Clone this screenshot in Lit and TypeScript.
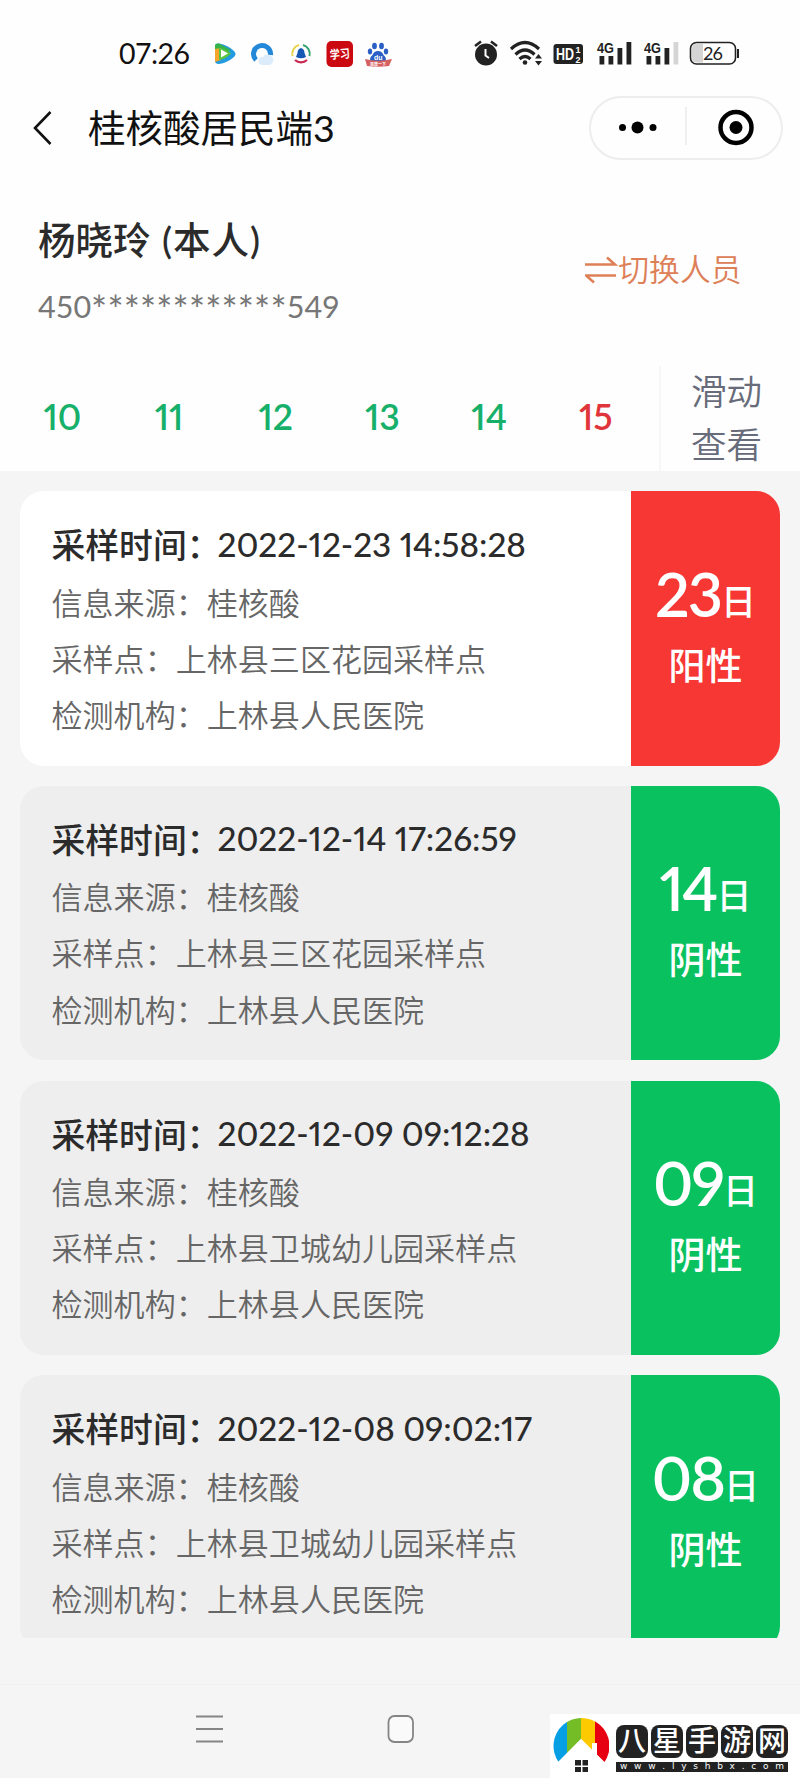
import { LitElement, html, css, svg } from "lit";
import { customElement, property } from "lit/decorators.js";
import { classMap } from "lit/directives/class-map.js";

interface Sample {
  time: string;
  source: string;
  place: string;
  agency: string;
  day: string;
  positive: boolean;
}

const samples: Sample[] = [
  { time: "2022-12-23 14:58:28", source: "桂核酸", place: "上林县三区花园采样点", agency: "上林县人民医院", day: "23", positive: true },
  { time: "2022-12-14 17:26:59", source: "桂核酸", place: "上林县三区花园采样点", agency: "上林县人民医院", day: "14", positive: false },
  { time: "2022-12-09 09:12:28", source: "桂核酸", place: "上林县卫城幼儿园采样点", agency: "上林县人民医院", day: "09", positive: false },
  { time: "2022-12-08 09:02:17", source: "桂核酸", place: "上林县卫城幼儿园采样点", agency: "上林县人民医院", day: "08", positive: false },
];

@customElement("status-bar")
class StatusBar extends LitElement {
  static styles = css`
    :host { display: block; height: 80px; }
    svg { display: block; }
    .t { font-family: Lato, "Liberation Sans", sans-serif; }
    .hd { font-family: "Liberation Sans", sans-serif; font-weight: 700; }
    .zh { font-family: "Noto Sans CJK SC", sans-serif; font-weight: 700; }
  `;
  signal(x: number, last: string) {
    return svg`<g transform="translate(${x} 0)">
      <text class="hd" x="-3" y="53" font-size="15.500" textLength="17" lengthAdjust="spacingAndGlyphs" fill="#222">4G</text>
      <rect x="-0.500" y="56" width="4.800" height="8.500" fill="#222"/>
      <rect x="8.500" y="56" width="4.800" height="8.500" fill="#222"/>
      <rect x="17.500" y="48" width="4.800" height="16.500" fill="#222"/>
      <rect x="26.500" y="42" width="4.800" height="22.500" fill="${last}"/>
    </g>`;
  }
  render() {
    return html`<svg width="800" height="80" viewBox="0 0 800 80">
      <text class="t" x="119" y="64" font-size="28.500" textLength="71" fill="#111">07:26</text>
      <path d="M215 46Q215 43 219 43.500Q228 45 234 51Q237 54 234 57Q227 63 219 64Q215 64 215 61Z" fill="#239be0"/>
      <path d="M215 46Q215 43 219 43.500L231 50L222 54L215 50Z" fill="#36b44a"/>
      <path d="M215 49L221 48V60L215 62Z" fill="#f5a52a"/>
      <path d="M219 48Q227 49 231 53.500Q226 59 219 60Z" fill="#59c441"/>
      <path d="M221 49.500L228 53.500L221 57.500Z" fill="#fff"/>
      <path d="M256 60A8.500 8.500 0 1 1 270.500 55" fill="none" stroke="#2488d8" stroke-width="5"/>
      <path d="M262 65H270A5 5 0 0 0 271 56A5 5 0 0 0 263 57A4 4 0 0 0 262 65Z" fill="#dcecfa"/>
      <path d="M292.500 56A9 9 0 0 1 299 45" fill="none" stroke="#e6d34a" stroke-width="2"/>
      <path d="M303 45A9 9 0 0 1 309.500 56" fill="none" stroke="#35a06f" stroke-width="2"/>
      <path d="M295 60A9 9 0 0 0 307 60" fill="none" stroke="#c92950" stroke-width="2.300"/>
      <path d="M301 48Q304.500 49 304.500 53L306 57Q301 59.500 296 57L297.500 53Q297.500 49 301 48Z" fill="#1758b5"/>
      <rect x="326.500" y="41" width="26.500" height="26" rx="5" fill="#ca0910"/>
      <text class="zh" x="330" y="58.500" font-size="12" textLength="20" lengthAdjust="spacingAndGlyphs" fill="#fff" transform="rotate(-5 340 55)">学习</text>
      <g fill="#2b5fc5">
        <ellipse cx="374.500" cy="46" rx="2.400" ry="3.200"/><ellipse cx="381.500" cy="46" rx="2.400" ry="3.200"/>
        <ellipse cx="370" cy="51.500" rx="2.200" ry="3"/><ellipse cx="386" cy="51.500" rx="2.200" ry="3"/>
        <path d="M378 51Q382 51 383.500 55Q387 58 385.500 61Q383 63 378 62Q373 63 370.500 61Q369 58 372.500 55Q374 51 378 51Z"/>
      </g>
      <text class="hd" x="374" y="59.500" font-size="7" fill="#fff">du</text>
      <path d="M365 59Q378 62.500 392 59L389 66Q378 67.500 367 66Z" fill="#d56161"/>
      <text class="zh" x="370" y="65.500" font-size="4" fill="#fff">百度一下</text>

      <circle cx="486" cy="54.500" r="11" fill="#222"/>
      <path d="M485.500 49V55.500L489 58" fill="none" stroke="#fff" stroke-width="2"/>
      <path d="M475 46L481 41.500M491 41.500L497 46" stroke="#222" stroke-width="2.500"/>
      <g fill="none" stroke="#222" stroke-width="3.200">
        <path d="M511 49Q525 36 539 49"/><path d="M515.500 54.500Q525 45.500 534.500 54.500"/><path d="M519.500 59Q525 54 530.500 59"/>
      </g>
      <circle cx="525" cy="62.500" r="2.300" fill="#222"/>
      <path d="M535 58.500L538.500 54L542 58.500ZM535 61L538.500 65.500L542 61Z" fill="#222"/>
      <rect x="553.500" y="44" width="29.500" height="20" rx="3" fill="#222"/>
      <text class="hd" x="556" y="60" font-size="16.500" textLength="18" lengthAdjust="spacingAndGlyphs" fill="#fff">HD</text>
      <text class="hd" x="575.500" y="53.300" font-size="9" fill="#fff">1</text>
      <text class="hd" x="575.500" y="62.500" font-size="9" fill="#fff">2</text>
      ${this.signal(600, "#222")}
      ${this.signal(647, "#d5d5d5")}
      <rect x="690.500" y="42.500" width="45" height="21.500" rx="6" fill="#fff" stroke="#222" stroke-width="1.600"/>
      <path d="M703 44V62.500H696Q692 62.500 692 58V48.500Q692 44 696 44Z" fill="#d4d4d4"/>
      <rect x="737" y="49" width="2" height="9" fill="#222"/>
      <text class="t" x="703" y="60" font-size="18" textLength="20" fill="#222">26</text>
    </svg>`;
  }
}

@customElement("sample-card")
class SampleCard extends LitElement {
  @property({ attribute: false }) sample!: Sample;
  static styles = css`
    :host { display: block; flex: none; }
    .card {
      display: grid; grid-template-columns: 611px 149px; height: 274.500px;
      border-radius: 24px; overflow: hidden; background: #eee;
    }
    .positive { background: #fff; }
    .info { padding: 25px 0 0 31.500px; white-space: nowrap; }
    .head { display: flex; align-items: center; height: 55px; font-weight: 500; font-size: 33.800px; color: #2b2b2b; }
    .time {
      font-family: Lato, "Liberation Sans", sans-serif; font-size: 33.300px; font-weight: 500;
      font-feature-settings: "pnum"; margin-left: -3px;
    }
    .row { height: 56.200px; line-height: 56.200px; font-size: 31.050px; font-weight: 350; color: #666; }
    .first { padding-top: 3.500px; }
    .badge {
      background: #0ac160; color: #fff; font-weight: 500;
      display: flex; flex-direction: column; align-items: center; padding-top: 67.500px;
    }
    .positive .badge { background: #f63734; }
    .day { display: flex; align-items: baseline; height: 72px; line-height: 70px; font-size: 35px; }
    .num { font-family: Lato, "Liberation Sans", sans-serif; font-size: 61px; font-weight: 600; font-feature-settings: "pnum"; letter-spacing: -2px; }
    .unit { position: relative; top: -2px; }
    .result { height: 70px; line-height: 70px; font-size: 37px; }
  `;
  render() {
    const s = this.sample;
    return html`<div class=${classMap({ card: true, positive: s.positive })}>
      <div class="info">
        <div class="head"><span>采样时间：</span><span class="time">${s.time}</span></div>
        <div class="row first">信息来源：${s.source}</div>
        <div class="row">采样点：${s.place}</div>
        <div class="row">检测机构：${s.agency}</div>
      </div>
      <div class="badge">
        <div class="day"><span class="num">${s.day}</span><span class="unit">日</span></div>
        <div class="result">${s.positive ? "阳性" : "阴性"}</div>
      </div>
    </div>`;
  }
}

@customElement("site-mark")
class SiteMark extends LitElement {
  static styles = css`
    :host { display: flex; width: 250px; height: 64px; background: #fff; }
    .logo { width: 66px; height: 64px; flex: none; }
    .words { padding-top: 10.500px; }
    .tiles { display: flex; gap: 3px; margin-bottom: 4.500px; }
    .tile {
      width: 32px; height: 33px; line-height: 31px; border-radius: 8px; background: #222; color: #fff;
      text-align: center; font-size: 28px; font-weight: 500;
    }
    .url {
      display: flex; justify-content: space-between; width: 164px; padding: 0 4px; height: 10px; line-height: 8px;
      background: #222; color: #fff; font-family: "DejaVu Sans", sans-serif; font-size: 9px;
    }
  `;
  render() {
    return html`<svg class="logo" viewBox="0 0 66 64">
        <defs><clipPath id="dome"><path d="M8.500 48A28 28 0 1 1 54.500 48L31 25Z"/></clipPath></defs>
        <g clip-path="url(#dome)">
          <rect x="3" y="4" width="14" height="46" fill="#079fe4"/><rect x="17" y="4" width="14" height="46" fill="#75bd26"/>
          <rect x="31" y="4" width="14" height="46" fill="#fdca00"/><rect x="45" y="4" width="14" height="46" fill="#e70012"/>
        </g>
        <path d="M31 25L8 48H54L47 41V29H42V36Z" fill="#fff"/>
        <path d="M25 46H31V51.500H25ZM32.500 46H38V51.500H32.500ZM25 53H31V58H25ZM32.500 53H38V58H32.500Z" fill="#222"/>
      </svg>
      <div class="words">
        <div class="tiles">${[..."八星手游网"].map((c) => html`<span class="tile">${c}</span>`)}</div>
        <div class="url">${[..."www.lyshbx.com"].map((c) => html`<span>${c}</span>`)}</div>
      </div>`;
  }
}

@customElement("app-root")
class AppRoot extends LitElement {
  static styles = css`
    :host {
      display: flex; flex-direction: column; position: relative; width: 800px; height: 1778px; overflow: hidden;
      background: #f5f5f5; font-family: Lato, "Noto Sans CJK SC", sans-serif; color: #111;
    }
    .top { background: #fefefe; height: 471px; flex: none; }
    .bar { display: flex; align-items: center; height: 95px; padding: 0 17.500px 0 32px; }
    .back { width: 20px; height: 34px; margin-right: 36px; }
    .title { flex: 1; font-size: 37.500px; padding-bottom: 4px; }
    .capsule {
      display: flex; align-items: center; box-sizing: border-box; width: 194px; height: 64px;
      border: 2px solid #ededed; border-radius: 32px;
    }
    .person { display: flex; justify-content: space-between; height: 191px; padding: 0 58.500px 0 38px; }
    .name { padding-top: 35px; height: 60px; line-height: 60px; font-size: 37.500px; font-weight: 500; color: #2b2b2b; }
    .name .self { letter-spacing: 1px; margin-left: 2px; }
    .id { display: flex; height: 72px; line-height: 72px; font-size: 30.500px; color: #777; }
    .stars { font-size: 38px; letter-spacing: 0.150px; padding-top: 3px; }
    .switch { display: flex; align-items: center; height: 189px; font-size: 30.800px; font-weight: 350; color: #dd8058; }
    .switch span { padding-bottom: 4px; }
    .days { display: flex; height: 105px; }
    .strip { display: grid; grid-template-columns: repeat(6, 106.700px); padding-left: 9px; width: 650px; border-right: 2px solid #f7f7f7; }
    .date { line-height: 102px; text-align: center; font-size: 35.500px; font-weight: 600; color: #16b06a; font-feature-settings: "pnum"; }
    .alert { color: #e0353b; }
    .more { padding-left: 30px; width: 74px; line-height: 53px; font-size: 35.500px; font-weight: 350; color: #676b7a; margin-top: -1px; }
    .list { display: flex; flex-direction: column; gap: 20.300px; padding: 20px 20px 0; }
    .clip { height: 1167px; overflow: hidden; flex: none; }
    .nav { flex: 1; border-top: 1px solid #f1f1f1; margin-top: 46px; }
    .nav svg { display: block; margin-top: -5px; }
    .mark { position: absolute; left: 550px; top: 1714px; }
  `;
  render() {
    const dates = ["10", "11", "12", "13", "14", "15"];
    return html`
      <div class="top">
        <status-bar></status-bar>
        <div class="bar">
          <svg class="back" viewBox="0 0 20 34"><path d="M18.500 1L3 17L18.500 33" fill="none" stroke="#111" stroke-width="2.600"/></svg>
          <span class="title">桂核酸居民端3</span>
          <div class="capsule">
            <svg width="190" height="60" viewBox="0 0 190 60">
              <circle cx="31.500" cy="29.500" r="3.500"/><circle cx="46.500" cy="29.500" r="6"/><circle cx="62" cy="29.500" r="3.500"/>
              <path d="M95 9V47" stroke="#e0e0e0"/>
              <circle cx="145" cy="29.500" r="15.500" fill="none" stroke="#000" stroke-width="4.500"/><circle cx="145" cy="29.500" r="6.500"/>
            </svg>
          </div>
        </div>
        <div class="person">
          <div>
            <div class="name">杨晓玲 <span class="self">(本人)</span></div>
            <div class="id">450<span class="stars">************</span>549</div>
          </div>
          <div class="switch">
            <svg width="33" height="30" viewBox="0 0 33 30"><path d="M0 9.500H30L22 2.500M31 20.500H1L9 27.500" fill="none" stroke="#dd8058" stroke-width="2.600"/></svg>
            <span>切换人员</span>
          </div>
        </div>
        <div class="days">
          <div class="strip">${dates.map((d) => html`<span class=${classMap({ date: true, alert: d === "15" })}>${d}</span>`)}</div>
          <div class="more">滑动查看</div>
        </div>
      </div>
      <div class="clip">
        <div class="list">${samples.map((s) => html`<sample-card .sample=${s}></sample-card>`)}</div>
      </div>
      <div class="nav">
        <svg width="540" height="90" viewBox="0 0 540 90">
          <path d="M196 36.500H223M196 49H223M196 61.500H223" stroke="#858585" stroke-width="2"/>
          <rect x="388.500" y="36" width="24.500" height="26" rx="6" fill="#fafafa" stroke="#858585" stroke-width="1.800"/>
        </svg>
      </div>
      <site-mark class="mark"></site-mark>`;
  }
}
